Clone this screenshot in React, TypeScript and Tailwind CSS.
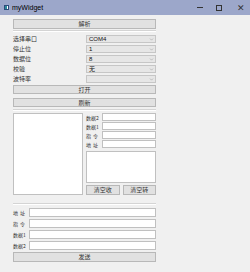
import { ChevronDown } from "lucide-react";

const font = { fontFamily: '"Noto Sans CJK SC", "Noto Sans", sans-serif' };

function Btn({ label, className = "" }: { label: string; className?: string }) {
    return (
        <div className={`flex items-center justify-center border border-[#b8b8b8] bg-[#e1e1e1] text-[6px] leading-none text-[#333] ${className}`}>
            {label}
        </div>
    );
}

function Combo({ label, value }: { label: string; value: string }) {
    return (
        <div className="flex h-[8px] items-center">
            <span className="w-[73px] text-[6px] leading-none text-[#333]">{label}</span>
            <div className="flex h-[8px] w-[70px] items-center justify-between border border-[#c6c6c6] bg-[#e6e6e6] pl-[2px] pr-[1px]">
                <span className="text-[6px] leading-none text-[#111]" style={{ fontFamily: '"Liberation Sans", "Noto Sans CJK SC", sans-serif' }}>{value}</span>
                <ChevronDown className="h-[5px] w-[5px] text-[#888]" strokeWidth={2} />
            </div>
        </div>
    );
}

function Field({ label }: { label: string }) {
    const parts = label.split(" ");
    return (
        <div className="flex h-full items-center text-[5px] leading-none text-[#333]">
            <div className="flex w-[16px] shrink-0 items-center whitespace-nowrap">
                {parts.length > 1 ? (
                    <div className="flex w-[12px] justify-between">
                        <span>{parts[0]}</span>
                        <span>{parts[1]}</span>
                    </div>
                ) : (
                    <span>{label}</span>
                )}
            </div>
            <div className="h-full flex-1 border border-[#c0c0c0] bg-white"></div>
        </div>
    );
}

function Sep() {
    return <div className="border-t border-b border-t-[#d4d4d4] border-b-white"></div>;
}

export default function App() {
    return (
        <div className="h-[272px] w-[250px] bg-[#f0f0f0]" style={font}>
            <div className="flex h-[15px] items-center bg-[#9ca7ca]">
                <div className="ml-[4px] flex h-[5px] w-[5px] border border-[#2d4b7a] bg-white">
                    <div className="w-[2px] bg-[#2d8a9a]"></div>
                </div>
                <span className="ml-[3px] text-[7px] leading-none text-black" style={{ fontFamily: '"Liberation Sans", sans-serif' }}>myWidget</span>
                <div className="ml-auto flex items-center">
                    <div className="mr-[13px] h-px w-[6px] bg-[#333]"></div>
                    <div className="mr-[15px] h-[6px] w-[6px] border border-[#333]"></div>
                    <span className="mr-[5px] text-[9px] leading-none text-[#333]">✕</span>
                </div>
            </div>

            <div className="ml-[13px] flex w-[143px] flex-col pt-[4px]">
                <Btn label="解析" className="h-[10px]" />
                <div className="mt-[1px]"><Sep /></div>

                <div className="mt-[3px] flex flex-col gap-[2px]">
                    <Combo label="选择串口" value="COM4" />
                    <Combo label="停止位" value="1" />
                    <Combo label="数据位" value="8" />
                    <Combo label="校验" value="无" />
                    <Combo label="波特率" value="" />
                </div>

                <Btn label="打开" className="mt-[2px] h-[9px]" />
                <Btn label="刷新" className="mt-[4px] h-[9px]" />
                <div className="mt-[2px]"><Sep /></div>

                <div className="mt-[2px] flex h-[82px] gap-[3px]">
                    <div className="w-[70px] border border-[#c0c0c0] bg-white"></div>
                    <div className="flex w-[70px] flex-col">
                        <div className="flex flex-col gap-[1px]">
                            <div className="h-[8px]"><Field label="数据2" /></div>
                            <div className="h-[8px]"><Field label="数据1" /></div>
                            <div className="h-[8px]"><Field label="指 令" /></div>
                            <div className="h-[8px]"><Field label="地 址" /></div>
                        </div>
                        <div className="mt-[3px] h-[32px] border border-[#c0c0c0] bg-white"></div>
                        <div className="mt-[2px] flex h-[10px] gap-[3px]">
                            <Btn label="清空收" className="flex-1" />
                            <Btn label="清空转" className="flex-1" />
                        </div>
                    </div>
                </div>

                <div className="mt-[8px]"><Sep /></div>

                <div className="mt-[3px] flex flex-col gap-[2px]">
                    <div className="h-[9px]"><Field label="地 址" /></div>
                    <div className="h-[9px]"><Field label="指 令" /></div>
                    <div className="h-[9px]"><Field label="数据1" /></div>
                    <div className="h-[9px]"><Field label="数据2" /></div>
                </div>
                <Btn label="发送" className="mt-[2px] h-[10px]" />
            </div>
        </div>
    );
}
